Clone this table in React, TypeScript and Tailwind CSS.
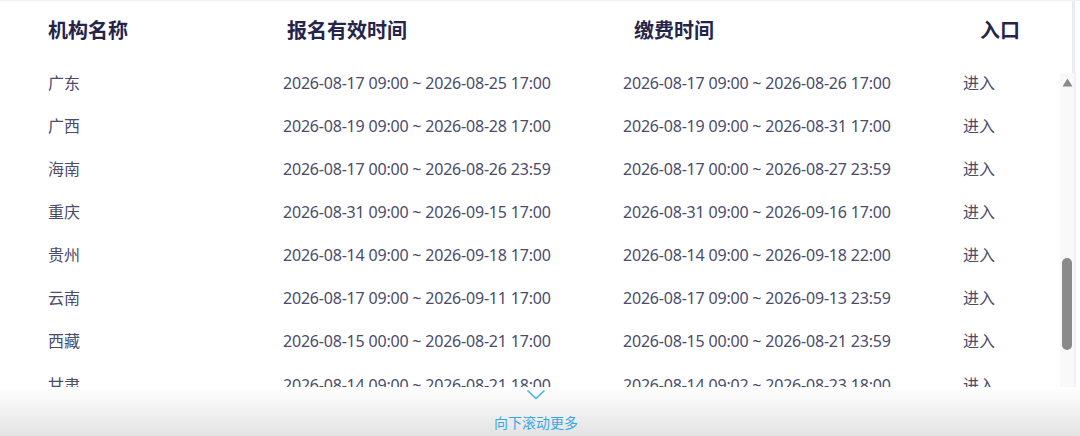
const rows = [
  ["广东", "2026-08-17 09:00 ~ 2026-08-25 17:00", "2026-08-17 09:00 ~ 2026-08-26 17:00"],
  ["广西", "2026-08-19 09:00 ~ 2026-08-28 17:00", "2026-08-19 09:00 ~ 2026-08-31 17:00"],
  ["海南", "2026-08-17 00:00 ~ 2026-08-26 23:59", "2026-08-17 00:00 ~ 2026-08-27 23:59"],
  ["重庆", "2026-08-31 09:00 ~ 2026-09-15 17:00", "2026-08-31 09:00 ~ 2026-09-16 17:00"],
  ["贵州", "2026-08-14 09:00 ~ 2026-09-18 17:00", "2026-08-14 09:00 ~ 2026-09-18 22:00"],
  ["云南", "2026-08-17 09:00 ~ 2026-09-11 17:00", "2026-08-17 09:00 ~ 2026-09-13 23:59"],
  ["西藏", "2026-08-15 00:00 ~ 2026-08-21 17:00", "2026-08-15 00:00 ~ 2026-08-21 23:59"],
  ["甘肃", "2026-08-14 09:00 ~ 2026-08-21 18:00", "2026-08-14 09:02 ~ 2026-08-23 18:00"],
];

const font = { fontFamily: '"Noto Sans", "Noto Sans CJK SC", sans-serif' };

export default function App() {
  return (
    <div
      className="flex h-[436px] w-[1080px] flex-col overflow-hidden border-t border-[#f1f1f1] bg-white"
      style={font}
    >
      <div className="flex h-[386px]">
        {/* table */}
        <div className="flex w-[1060px] flex-col">
          <div className="grid h-[60px] grid-cols-[48px_235px_340px_340px_1fr] items-center text-[20px] font-bold text-[#25254c]">
            <div />
            <div>机构名称</div>
            <div className="pl-[4px]">报名有效时间</div>
            <div className="pl-[11px]">缴费时间</div>
            <div className="pl-[17px]">入口</div>
          </div>
          <div className="flex-1 overflow-hidden">
            {rows.map(([name, signup, pay]) => (
              <div
                key={name}
                className="grid h-[43.15px] grid-cols-[48px_235px_340px_340px_1fr] items-center text-[16px] text-[#4b4b6b]"
              >
                <div />
                <div>{name}</div>
                <div className="tracking-[-0.2px]">{signup}</div>
                <div className="tracking-[-0.2px]">{pay}</div>
                <div>进入</div>
              </div>
            ))}
          </div>
        </div>

        {/* scrollbars */}
        <div className="flex w-[20px] flex-col">
          <div className="flex h-[72px]">
            <div className="w-[12px]" />
            <div className="w-[3px] bg-[#e7edf3]" />
          </div>
          <div className="flex flex-1">
            <div className="flex w-[14px] flex-col items-center bg-[#f9f9f9] pt-[5px]">
              <svg width="11" height="9" viewBox="0 0 11 9">
                <path d="M5.5 0.5 L10.5 8.5 L0.5 8.5 Z" fill="#8a8a8a" />
              </svg>
              <div className="mt-[171px] h-[92px] w-[10px] rounded-full bg-[#8a8a8a]" />
            </div>
            <div className="w-[2px] bg-[#eef2f6]" />
          </div>
        </div>
      </div>

      {/* footer */}
      <div className="flex flex-1 flex-col items-center bg-gradient-to-b from-white to-[#e3e3e3] pr-[8px]">
        <svg width="20" height="11" viewBox="0 0 20 11" className="mt-[2px]">
          <path d="M1.5 1.5 L10 9.5 L18.5 1.5" fill="none" stroke="#46b0ec" strokeWidth="1.6" />
        </svg>
        <div className="mt-[15px] text-[14px] leading-none text-[#3aa6e6]" style={{ fontFamily: '"Noto Sans CJK SC", sans-serif' }}>
          向下滚动更多
        </div>
      </div>
    </div>
  );
}
